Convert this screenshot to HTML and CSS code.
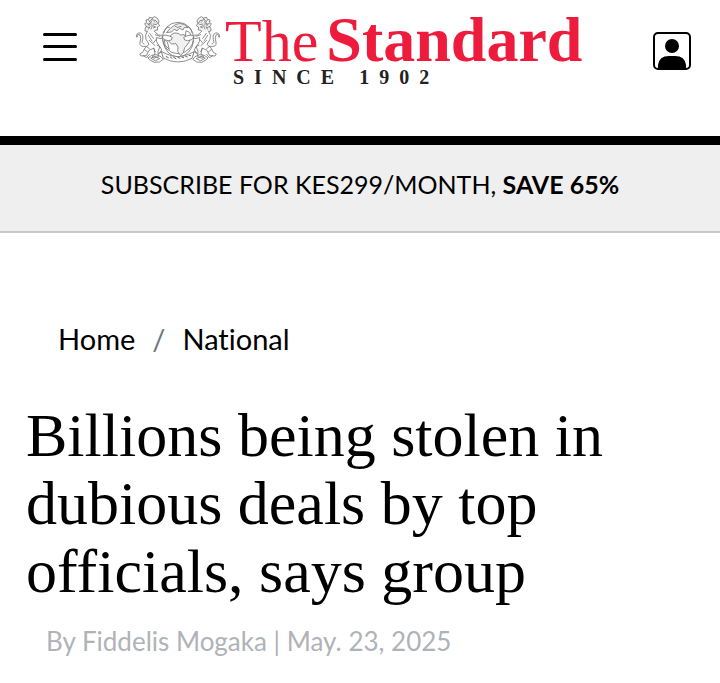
FILE: index.html
```html
<!DOCTYPE html>
<html lang="en">
<head>
<meta charset="utf-8">
<meta name="viewport" content="width=device-width, initial-scale=1">
<title>Billions being stolen in dubious deals by top officials, says group</title>
<link rel="stylesheet" href="styles.css">
</head>
<body>
<header class="header">
  <button class="icon-button" type="button" aria-label="Menu">
    <svg width="34" height="30" viewBox="0 0 34 30" fill="none" stroke="#000" stroke-width="3" stroke-linecap="round"><path d="M1.500 2.500h31M1.500 14.500h31M1.500 27.500h31"/></svg>
  </button>
  <a class="logo" href="#">
    <svg class="emblem" width="86" height="52" viewBox="16 29 258 156" fill="none" stroke="#777" stroke-width="2.500" stroke-linecap="round" stroke-linejoin="round" aria-hidden="true">
      <g id="lion">
        <path d="M50 64l-5-9 6-3-2-8 8-2 2-6 9 2 7-4 8 5 5 8-2 8 4 6-7 4 1 9-8 1-4 7-8-2-7 4-4-6-7-1 1-9z" fill="#f4f4f4"/>
        <path d="M66 43l13 3 5 8-5 4-9-2m0 5 8 4-7 3M57 44l5 8-6 6 5 6-5 8M65 48l-2 8 5 6-4 9M73 49l3 2M52 55l8 2M50 64l9 3M69 39l-7 8"/>
        <path d="M53 78q-9 12-4 24l9 15-12 11-7 13-9 5 4 6 16-1 8-16 15-7 3 18-8 6 4 7 14-5-1-15 5-14-9-16-1-12 15 3 8-10-17-1-12-11-1" fill="#fff"/>
        <path d="M60 84l11 15M56 90l11 17M59 105l17 16M77 88l14 5M50 123l9 7M45 133l8 6m19-9 5 9M79 103l-8 10"/>
        <path d="M49 123Q28 127 31 110Q36 98 31 89Q22 84 23 94M43 116Q34 114 39 103Q42 86 32 83Q20 81 20 95"/>
        <path d="M56 157l10-7 14-2 14 6 7 8-12 8-15 1-13-7zm8 1 12-5 14 7-12 6zM86 146l11-7 4 12M82 119q12 2 14 15l-7 9M41 151l10 6 8-10"/>
      </g>
      <use href="#lion" transform="translate(290 0) scale(-1 1)"/>
      <g transform="translate(2 0)">
        <circle cx="143" cy="98" r="47" fill="#fff"/>
        <path d="M101 82Q106 62 117 66M185 82Q181 60 168 66M98 106Q104 151 143 155Q183 151 190 106"/>
        <path d="M109 81l12-13 14-10 13-4 15 4 10 9-11-1-4 8-10-5-8 7-9-4-6 7z" fill="#ececec"/>
        <path d="M122 89l9-6 12 1 8 5 11-1 8 12 9 6-9 13-7 8-4 15-9 8-8-12 1-13-6-10-14 1-9-10 3-11z" fill="#f1f1f1"/>
        <path d="M135 63l7 3 10-3M168 77l10 4 5 12-8 8-9-8zM103 102l8 8 6 22-12-12z"/>
        <path d="M96 93l8-4 13 3 9 4-3 8-9 2-12-3zM190 93l-8-4-13 3-9 4 3 8 9 2 12-3z" fill="#fff"/>
        <path d="M94 139l15 7q33 16 68 0l14-7-6 20q-42 22-85 0z" fill="#fff"/>
        <path d="M108 154l6 3m6-2 5 4m5-3 7 4m6-4 6 3m5-4 6 2m6-4 5 2m5-5 5 1" stroke="#666" stroke-width="3"/>
      </g>
    </svg>
    <span class="wordmark">
      <span class="name"><span class="the">The</span><strong class="standard">Standard</strong></span>
      <span class="since">SINCE 1902</span>
    </span>
  </a>
  <button class="icon-button" type="button" aria-label="Account">
    <svg width="38" height="38" viewBox="0 0 38 38"><rect x="1" y="1" width="36" height="36" rx="4" fill="#fff" stroke="#000" stroke-width="2"/><circle cx="19" cy="14" r="7"/><path d="M5 36v-3q1-9 11-9h6q10 0 11 9v3z"/></svg>
  </button>
</header>
<a class="subscribe" href="#">SUBSCRIBE FOR KES299/MONTH, <strong>SAVE 65%</strong></a>
<main class="article">
  <nav class="breadcrumb" aria-label="Breadcrumb">
    <a href="#">Home</a><span class="divider">/</span><a href="#">National</a>
  </nav>
  <h1 class="headline">Billions being stolen in dubious deals by top officials, says group</h1>
  <p class="byline">By Fiddelis Mogaka | May. 23, 2025</p>
</main>
</body>
</html>
```
FILE: styles.css
```css
* { box-sizing: border-box; }

body {
  margin: 0;
  background: #fff;
  color: #000;
  font-family: Lato, "Noto Sans", sans-serif;
  font-variant-ligatures: none;
}

a { color: inherit; text-decoration: none; }

.header {
  display: grid;
  grid-template-columns: 92px 1fr auto;
  align-items: start;
  padding: 12px 29px 51px 43px;
  border-bottom: 9px solid #000;
}

.icon-button {
  display: flex;
  margin: 20px 0 0;
  padding: 0;
  border: 0;
  background: none;
}

.icon-button svg, .emblem { display: block; }

.logo {
  display: flex;
  align-items: flex-start;
  gap: 4px;
  font-family: "Liberation Serif", serif;
}

.emblem { margin-top: 3px; }

.wordmark { display: flex; flex-direction: column; }

.name {
  display: flex;
  align-items: baseline;
  gap: 8px;
  color: #ee1c3c;
  line-height: 56px;
}

.the { font-size: 60px; }
.standard { font-size: 64px; }

.since {
  padding-left: 8px;
  font-size: 20px;
  font-weight: bold;
  line-height: 16px;
  letter-spacing: 10px;
  color: #222;
}

.subscribe {
  display: block;
  padding: 20px 16px 28px;
  border-bottom: 2px solid #c8c8c8;
  background: #efefef;
  font-size: 25px;
  line-height: 38px;
  text-align: center;
}

.article { padding: 88px 26px 24px; }

.breadcrumb {
  display: flex;
  gap: 17px;
  padding-left: 32px;
  font-size: 29px;
  line-height: 36px;
}

.divider { color: #6c757d; }

.headline {
  margin: 44px 0 0;
  font-family: "Liberation Serif", serif;
  font-size: 62px;
  font-weight: normal;
  line-height: 68px;
  font-variant-ligatures: normal;
}

.byline {
  margin: 16px 0 0;
  padding-left: 20px;
  color: #afb3b7;
  font-size: 26px;
  line-height: 40px;
}
```
